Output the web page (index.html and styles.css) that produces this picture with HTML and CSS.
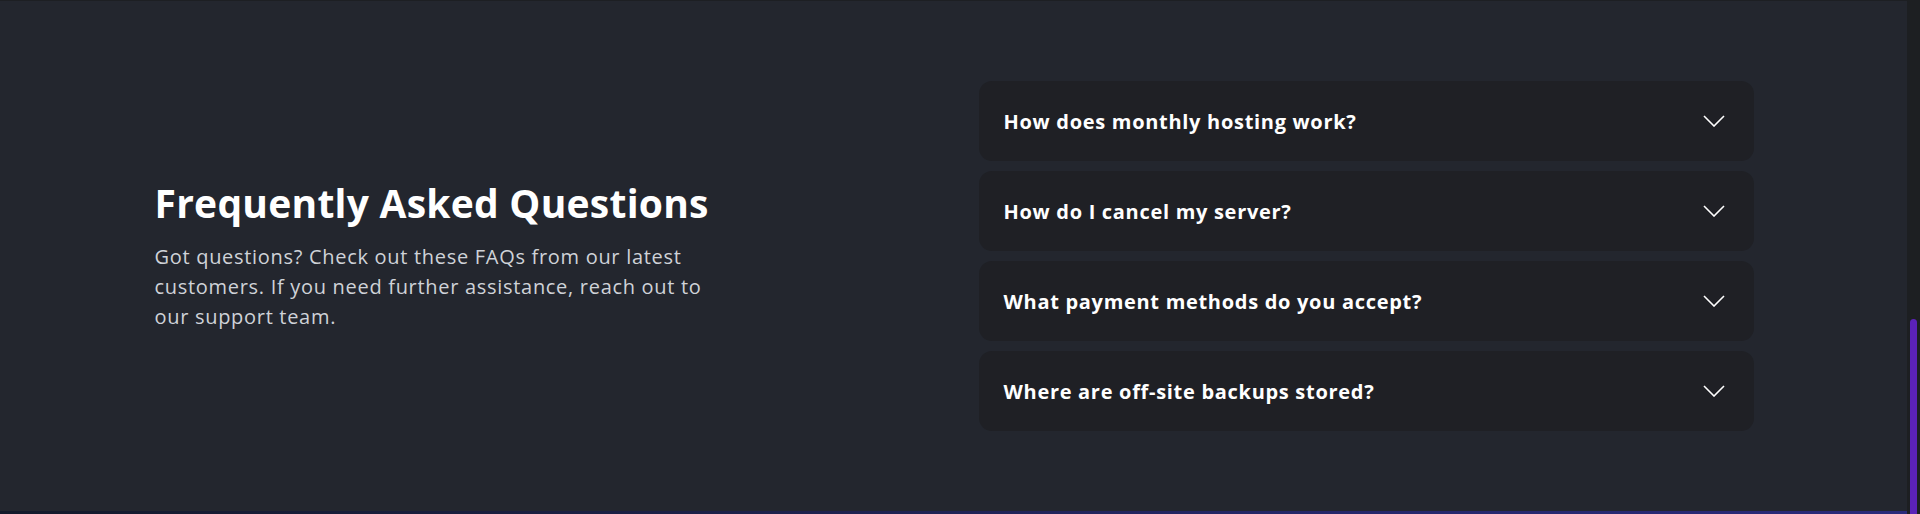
FILE: index.html
```html
<!DOCTYPE html>
<html lang="en">
<head>
<meta charset="utf-8">
<title>FAQ</title>
<link rel="stylesheet" href="styles.css">
</head>
<body>
<div class="page">
  <div class="main">
    <div class="topline"></div>
    <section class="faq">
      <div class="container">
        <div class="intro">
          <h2 class="title">Frequently Asked Questions</h2>
          <p class="lead">Got questions? Check out these FAQs from our latest customers. If you need further assistance, reach out to our support team.</p>
        </div>
        <div class="accordion">
          <div class="item">
            <span class="question">How does monthly hosting work?</span>
            <svg class="chev" width="22" height="12" viewBox="0 0 22 12"><polyline points="1,1 11,11 21,1" fill="none" stroke="#fff" stroke-width="1.6"/></svg>
          </div>
          <div class="item">
            <span class="question">How do I cancel my server?</span>
            <svg class="chev" width="22" height="12" viewBox="0 0 22 12"><polyline points="1,1 11,11 21,1" fill="none" stroke="#fff" stroke-width="1.6"/></svg>
          </div>
          <div class="item">
            <span class="question">What payment methods do you accept?</span>
            <svg class="chev" width="22" height="12" viewBox="0 0 22 12"><polyline points="1,1 11,11 21,1" fill="none" stroke="#fff" stroke-width="1.6"/></svg>
          </div>
          <div class="item">
            <span class="question">Where are off-site backups stored?</span>
            <svg class="chev" width="22" height="12" viewBox="0 0 22 12"><polyline points="1,1 11,11 21,1" fill="none" stroke="#fff" stroke-width="1.6"/></svg>
          </div>
        </div>
      </div>
    </section>
    <div class="next-strip"></div>
  </div>
  <div class="scrollbar"><div class="thumb"></div></div>
</div>
</body>
</html>
```
FILE: styles.css
```css
html, body {
  margin: 0;
  padding: 0;
  background: #23262e;
  font-family: "Open Sans", "Liberation Sans", sans-serif;
  overflow: hidden;
}

.page {
  display: flex;
  height: 514px;
}

.main {
  flex: 1;
  display: flex;
  flex-direction: column;
  min-width: 0;
}

.topline {
  height: 1px;
  background: #1d1f23;
}

.faq {
  padding: 80px 0;
  background: #23262e;
}

.container {
  width: 1600px;
  margin: 0 auto;
  display: grid;
  grid-template-columns: 1fr 1fr;
  column-gap: 50px;
  align-items: center;
}

.intro {
  padding-left: 1px;
}

.title {
  margin: 0 0 15px;
  font-size: 39px;
  line-height: 1.2;
  font-weight: 700;
  color: #ffffff;
  letter-spacing: 0.25px;
}

.lead {
  margin: 0;
  max-width: 565px;
  font-size: 20px;
  line-height: 30px;
  color: #cfd2d8;
  letter-spacing: 0.7px;
}

.accordion {
  display: flex;
  flex-direction: column;
  gap: 10px;
}

.item {
  height: 80px;
  box-sizing: border-box;
  background: #1f2025;
  border-radius: 13px;
  display: flex;
  align-items: center;
  justify-content: space-between;
  padding: 0 29px 0 25px;
}

.question {
  font-size: 20px;
  font-weight: 700;
  color: #ffffff;
  letter-spacing: 0.7px;
}

.chev {
  display: block;
}

.next-strip {
  height: 3px;
  background: linear-gradient(90deg, #141a2b 0%, #1c2046 35%, #25276a 70%, #2a2a7a 100%);
}

.scrollbar {
  width: 13px;
  background: #1d1f22;
  display: flex;
  flex-direction: column;
  align-items: center;
  padding-top: 319px;
  box-sizing: border-box;
}

.thumb {
  width: 7px;
  flex: 1;
  background: #5b22b8;
  border-radius: 4px 4px 0 0;
}
```
